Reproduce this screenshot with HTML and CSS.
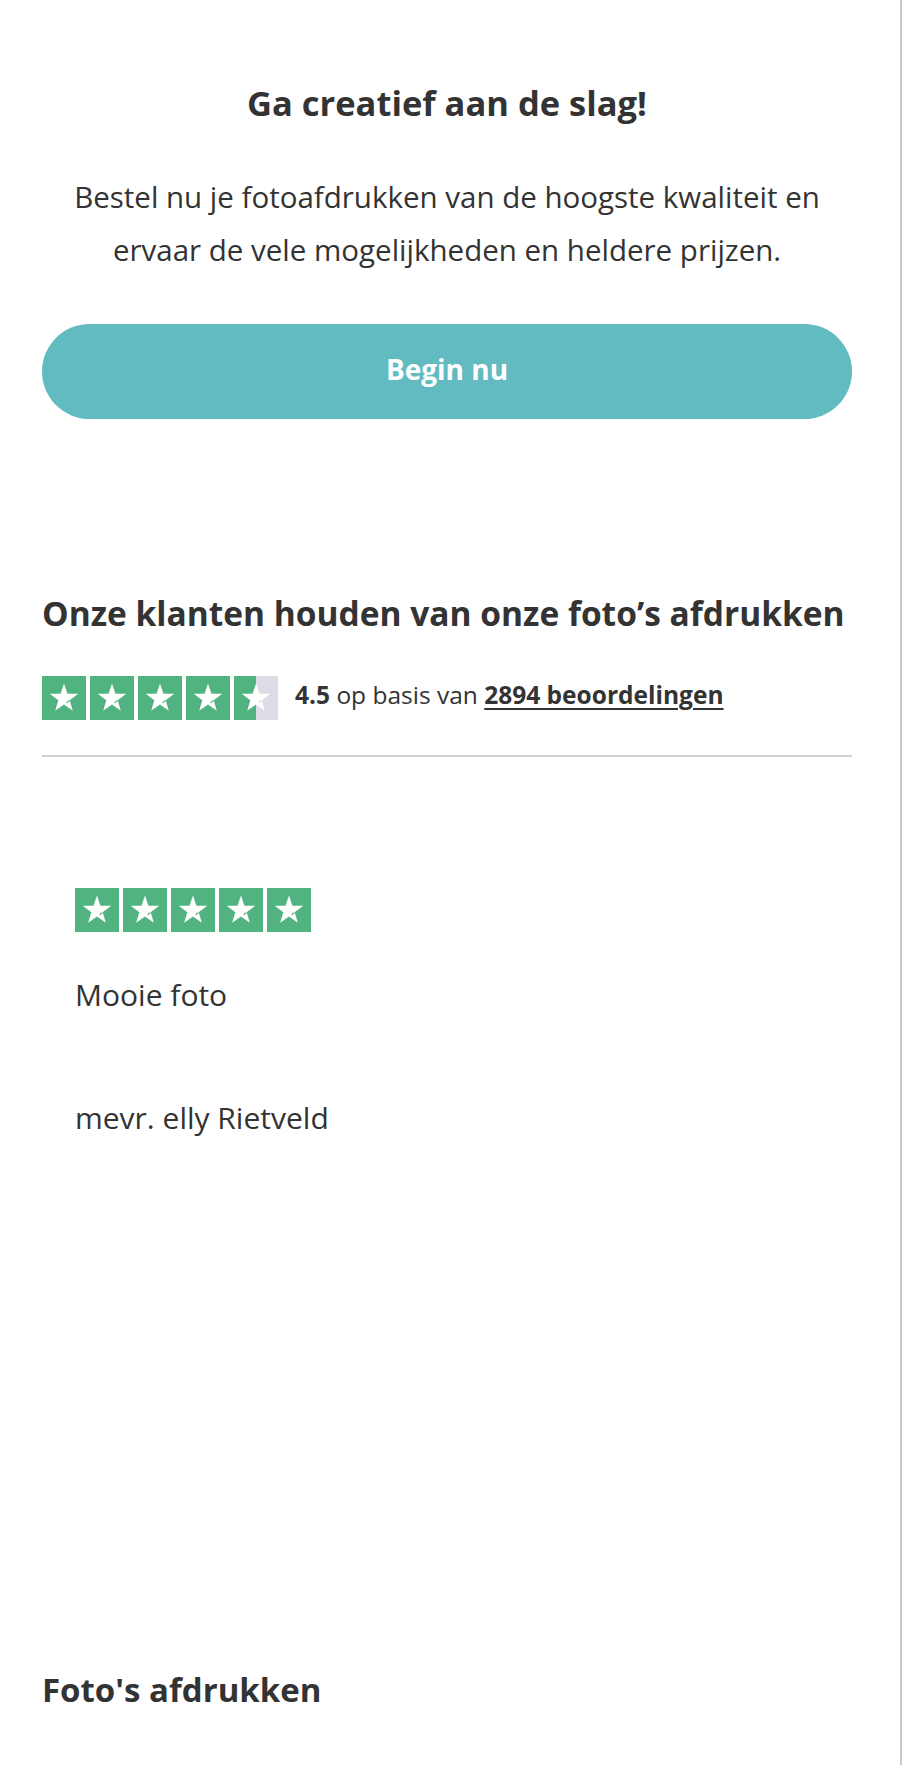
FILE: index.html
```html
<!DOCTYPE html>
<html lang="nl">
<head>
<meta charset="utf-8">
<title>Foto's afdrukken</title>
<link rel="stylesheet" href="styles.css">
</head>
<body>
<div class="page">
  <section class="hero">
    <h1 class="hero-title">Ga creatief aan de slag!</h1>
    <p class="hero-text">Bestel nu je fotoafdrukken van de hoogste kwaliteit en ervaar de vele mogelijkheden en heldere prijzen.</p>
    <a class="btn" href="#">Begin nu</a>
  </section>

  <section class="reviews">
    <h2 class="section-title">Onze klanten houden van onze foto’s afdrukken</h2>
    <div class="rating-row">
      <div class="stars">
        <span class="star"><svg viewBox="0 0 44 44"><polygon class="s" points="22,7.5 25.53,17.65 36.27,17.86 27.71,24.35 30.82,34.64 22,28.5 13.18,34.64 16.29,24.35 7.73,17.86 18.47,17.65"/><line class="cut" x1="27.4" y1="24.6" x2="24.6" y2="26.7"/></svg></span>
        <span class="star"><svg viewBox="0 0 44 44"><polygon class="s" points="22,7.5 25.53,17.65 36.27,17.86 27.71,24.35 30.82,34.64 22,28.5 13.18,34.64 16.29,24.35 7.73,17.86 18.47,17.65"/><line class="cut" x1="27.4" y1="24.6" x2="24.6" y2="26.7"/></svg></span>
        <span class="star"><svg viewBox="0 0 44 44"><polygon class="s" points="22,7.5 25.53,17.65 36.27,17.86 27.71,24.35 30.82,34.64 22,28.5 13.18,34.64 16.29,24.35 7.73,17.86 18.47,17.65"/><line class="cut" x1="27.4" y1="24.6" x2="24.6" y2="26.7"/></svg></span>
        <span class="star"><svg viewBox="0 0 44 44"><polygon class="s" points="22,7.5 25.53,17.65 36.27,17.86 27.71,24.35 30.82,34.64 22,28.5 13.18,34.64 16.29,24.35 7.73,17.86 18.47,17.65"/><line class="cut" x1="27.4" y1="24.6" x2="24.6" y2="26.7"/></svg></span>
        <span class="star half"><svg viewBox="0 0 44 44"><polygon class="s" points="22,7.5 25.53,17.65 36.27,17.86 27.71,24.35 30.82,34.64 22,28.5 13.18,34.64 16.29,24.35 7.73,17.86 18.47,17.65"/><line class="cut-grey" x1="27.4" y1="24.6" x2="24.6" y2="26.7"/></svg></span>
      </div>
      <p class="rating-text"><strong>4.5</strong> op basis van <a href="#" class="rating-link">2894 beoordelingen</a></p>
    </div>
    <hr class="divider">

    <article class="review-card">
      <div class="stars">
        <span class="star"><svg viewBox="0 0 44 44"><polygon class="s" points="22,7.5 25.53,17.65 36.27,17.86 27.71,24.35 30.82,34.64 22,28.5 13.18,34.64 16.29,24.35 7.73,17.86 18.47,17.65"/><line class="cut" x1="27.4" y1="24.6" x2="24.6" y2="26.7"/></svg></span>
        <span class="star"><svg viewBox="0 0 44 44"><polygon class="s" points="22,7.5 25.53,17.65 36.27,17.86 27.71,24.35 30.82,34.64 22,28.5 13.18,34.64 16.29,24.35 7.73,17.86 18.47,17.65"/><line class="cut" x1="27.4" y1="24.6" x2="24.6" y2="26.7"/></svg></span>
        <span class="star"><svg viewBox="0 0 44 44"><polygon class="s" points="22,7.5 25.53,17.65 36.27,17.86 27.71,24.35 30.82,34.64 22,28.5 13.18,34.64 16.29,24.35 7.73,17.86 18.47,17.65"/><line class="cut" x1="27.4" y1="24.6" x2="24.6" y2="26.7"/></svg></span>
        <span class="star"><svg viewBox="0 0 44 44"><polygon class="s" points="22,7.5 25.53,17.65 36.27,17.86 27.71,24.35 30.82,34.64 22,28.5 13.18,34.64 16.29,24.35 7.73,17.86 18.47,17.65"/><line class="cut" x1="27.4" y1="24.6" x2="24.6" y2="26.7"/></svg></span>
        <span class="star"><svg viewBox="0 0 44 44"><polygon class="s" points="22,7.5 25.53,17.65 36.27,17.86 27.71,24.35 30.82,34.64 22,28.5 13.18,34.64 16.29,24.35 7.73,17.86 18.47,17.65"/><line class="cut" x1="27.4" y1="24.6" x2="24.6" y2="26.7"/></svg></span>
      </div>
      <p class="review-title">Mooie foto</p>
      <p class="review-author">mevr. elly Rietveld</p>
    </article>
  </section>

  <section class="products">
    <h2 class="products-title">Foto's afdrukken</h2>
  </section>
</div>
</body>
</html>
```

FILE: styles.css
```css
* { box-sizing: border-box; }

html, body {
  margin: 0;
  padding: 0;
  background: #ffffff;
}

body {
  font-family: "Open Sans", "Noto Sans", "Liberation Sans", sans-serif;
  color: #333333;
}

.page {
  width: 902px;
  min-height: 1765px;
  border-right: 2px solid #c9c8cd;
  padding: 0 48px 0 42px;
}

/* hero */
.hero {
  padding-top: 81px;
  display: flex;
  flex-direction: column;
  align-items: stretch;
  text-align: center;
}

.hero-title {
  margin: 0;
  font-size: 34.5px;
  line-height: 44px;
  font-weight: 700;
}

.hero-text {
  margin: 45px 0 0;
  font-size: 29.5px;
  line-height: 53px;
  font-weight: 400;
}

.btn {
  margin-top: 48px;
  height: 95px;
  padding-bottom: 6px;
  border-radius: 48px;
  background: #63bbc2;
  color: #ffffff;
  text-decoration: none;
  font-size: 28px;
  font-weight: 700;
  display: flex;
  align-items: center;
  justify-content: center;
}

/* reviews */
.reviews {
  padding-top: 172px;
}

.section-title {
  margin: 0;
  font-size: 33.5px;
  line-height: 44px;
  font-weight: 700;
}

.rating-row {
  margin-top: 41px;
  display: flex;
  align-items: center;
  gap: 17px;
}

.stars {
  display: flex;
  gap: 4px;
}

.star {
  width: 44px;
  height: 44px;
  background: #51b37f;
  display: block;
}

.star svg {
  width: 44px;
  height: 44px;
  display: block;
}

.star .s { fill: #ffffff; }
.star .cut { stroke: #51b37f; stroke-width: 1.2; }
.star .cut-grey { stroke: #dcdce6; stroke-width: 1.2; }

.star.half {
  background: linear-gradient(to right, #51b37f 0, #51b37f 50%, #dcdce6 50%, #dcdce6 100%);
}

.rating-text {
  margin: -6px 0 0;
  font-size: 24.5px;
  line-height: 30px;
}

.rating-text strong { font-weight: 700; }

.rating-link {
  color: #333333;
  font-weight: 700;
  text-decoration: underline;
  text-decoration-thickness: 2px;
  text-underline-offset: 4px;
}

.divider {
  margin: 35px 0 0;
  border: 0;
  border-top: 2px solid #d2d2d2;
  height: 0;
}

.review-card {
  padding: 131px 33px 0;
  height: 911px;
}

.review-title {
  margin: 37px 0 0;
  font-size: 30px;
  line-height: 52px;
}

.review-author {
  margin: 71px 0 0;
  font-size: 30px;
  line-height: 52px;
}

.products-title {
  margin: 0;
  font-size: 33px;
  line-height: 44px;
  font-weight: 700;
}
```
